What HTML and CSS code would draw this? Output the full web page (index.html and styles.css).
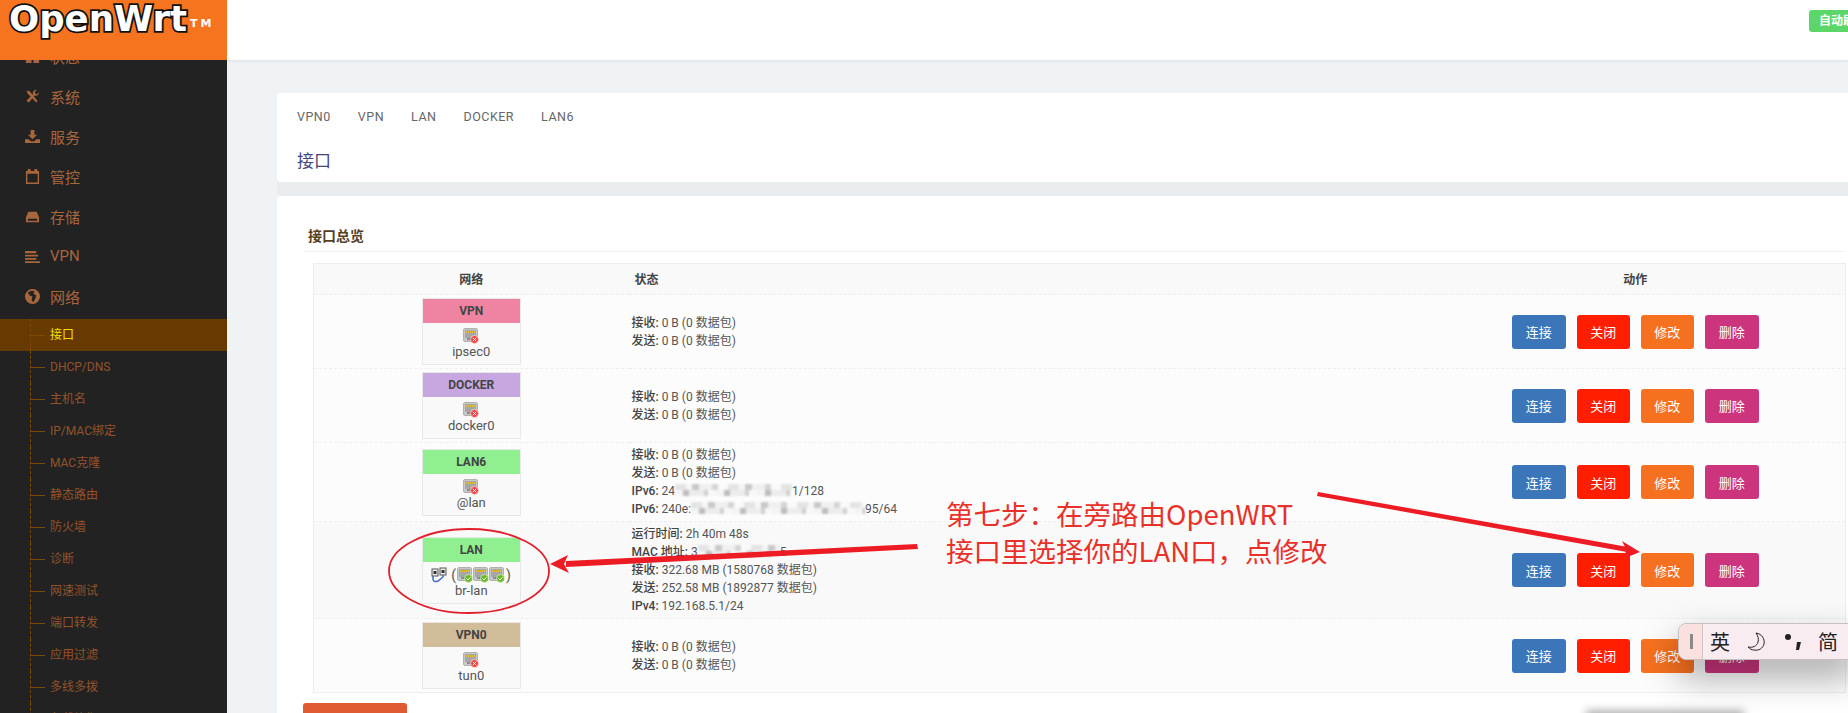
FILE: index.html
```html
<!DOCTYPE html>
<html lang="zh-CN">
<head>
  <meta charset="UTF-8" />
  <title>接口 - OpenWrt</title>
  <link rel="stylesheet" href="styles.css">
</head>
<body>
  <svg class="defs" width="0" height="0">
    <symbol id="port" viewBox="0 0 16 16">
      <rect x="0.5" y="0.5" width="14" height="13" rx="1.5" fill="#c8c8c8" stroke="#b0b0b0"/>
      <rect x="2" y="2" width="11" height="8" fill="#a6a6a6"/>
      <path d="M3 3h1v2H3zM5 3h1v2H5zM7 3h1v2H7zM9 3h1v2H9zM11 3h1v2h-1z" fill="#e0c040"/>
      <rect x="4" y="10" width="7" height="2" fill="#8c8c8c"/>
    </symbol>
    <symbol id="down" viewBox="0 0 16 16">
      <use href="#port"/>
      <circle cx="11.5" cy="11.5" r="4" fill="#ee4444" stroke="#fff" stroke-width="0.6"/>
      <path d="M9.8 9.8l3.4 3.4M13.2 9.8l-3.4 3.4" stroke="#fff" stroke-width="1"/>
    </symbol>
    <symbol id="up" viewBox="0 0 16 16">
      <use href="#port"/>
      <circle cx="11.5" cy="11.5" r="4" fill="#66bb22" stroke="#fff" stroke-width="0.6"/>
      <path d="M9.6 11.5l1.5 1.5 2.4-2.8" stroke="#fff" stroke-width="1" fill="none"/>
    </symbol>
  </svg>

  <div class="app">
    <aside class="sidebar">
      <div class="brand"><span class="logo">OpenWrt</span><span class="tm">TM</span></div>
      <nav class="menu">
        <a class="top" href="#">
          <svg class="ico" viewBox="0 0 16 16"><path d="M1 15V7l3-3 3 3v8zM9 15V7l3-3 3 3v8z"/></svg>状态
        </a>
        <a class="top" href="#">
          <svg class="ico" viewBox="0 0 16 16"><path d="M1.500 1.500l3.500 1L13.500 13l-1.500 1.500L3 5z"/><path d="M15 3.500a3.500 3.500 0 0 1-4.500 3.500L4 14.500 1.500 12.500 8.500 5.500A3.500 3.500 0 0 1 12.500 1L10.500 3l.5 2 2 .5z"/></svg>系统
        </a>
        <a class="top" href="#">
          <svg class="ico" viewBox="0 0 16 16"><path d="M6 1h4v5h3l-5 5-5-5h3z"/><path d="M0 11h4l2 2h4l2-2h4v4H0z"/></svg>服务
        </a>
        <a class="top" href="#">
          <svg class="ico" viewBox="0 0 16 16"><path fill-rule="evenodd" d="M1 2h2V0h3v2h4V0h3v2h2v14H1zM2.500 5v9.500h11V5z"/></svg>管控
        </a>
        <a class="top" href="#">
          <svg class="ico" viewBox="0 0 16 16"><path fill-rule="evenodd" d="M3.500 3h9L15 9v5H1V9zM3 10.500v2h10v-2z"/></svg>存储
        </a>
        <a class="top" href="#">
          <svg class="ico" viewBox="0 0 16 16"><path d="M0 2h12v2.500H0zM0 6h14v2H0zM0 9.500h12v2H0zM0 13h16v2H0z"/></svg>VPN
        </a>
        <a class="top" href="#">
          <svg class="ico" viewBox="0 0 16 16"><path fill-rule="evenodd" d="M8 0a8 8 0 1 1 0 16A8 8 0 0 1 8 0zM3 4l2 3 3 1-1 4 2 2 2-4 1-3-3-2 1-3H6z"/></svg>网络
        </a>
        <ul class="sub">
          <li><a class="active" href="#">接口</a></li>
          <li><a href="#">DHCP/DNS</a></li>
          <li><a href="#">主机名</a></li>
          <li><a href="#">IP/MAC绑定</a></li>
          <li><a href="#">MAC克隆</a></li>
          <li><a href="#">静态路由</a></li>
          <li><a href="#">防火墙</a></li>
          <li><a href="#">诊断</a></li>
          <li><a href="#">网速测试</a></li>
          <li><a href="#">端口转发</a></li>
          <li><a href="#">应用过滤</a></li>
          <li><a href="#">多线多拨</a></li>
          <li><a href="#">负载均衡</a></li>
        </ul>
      </nav>
    </aside>

    <div class="main">
      <header class="topbar"><span class="refresh">自动刷新</span></header>

      <div class="content">
        <section class="card head-card">
          <div class="tabs">
            <a href="#">VPN0</a><a href="#">VPN</a><a href="#">LAN</a><a href="#">DOCKER</a><a href="#">LAN6</a>
          </div>
          <h2 class="title">接口</h2>
        </section>

        <section class="card body-card">
          <h3 class="section">接口总览</h3>
          <table class="ifaces">
            <colgroup><col class="c1"><col class="c2"><col class="c3"></colgroup>
            <thead>
              <tr><th>网络</th><th class="left">状态</th><th>动作</th></tr>
            </thead>
            <tbody>
              <tr>
                <td>
                  <div class="badge">
                    <div class="band pink">VPN</div>
                    <svg class="port"><use href="#down"/></svg>
                    <div class="name">ipsec0</div>
                  </div>
                </td>
                <td class="status">
                  <b>接收:</b> 0 B (0 数据包)<br><b>发送:</b> 0 B (0 数据包)
                </td>
                <td class="actions">
                  <button class="blue">连接</button><button class="red">关闭</button><button class="orange">修改</button><button class="rose">删除</button>
                </td>
              </tr>
              <tr>
                <td>
                  <div class="badge">
                    <div class="band purple">DOCKER</div>
                    <svg class="port"><use href="#down"/></svg>
                    <div class="name">docker0</div>
                  </div>
                </td>
                <td class="status">
                  <b>接收:</b> 0 B (0 数据包)<br><b>发送:</b> 0 B (0 数据包)
                </td>
                <td class="actions">
                  <button class="blue">连接</button><button class="red">关闭</button><button class="orange">修改</button><button class="rose">删除</button>
                </td>
              </tr>
              <tr>
                <td>
                  <div class="badge">
                    <div class="band green">LAN6</div>
                    <svg class="port"><use href="#down"/></svg>
                    <div class="name">@lan</div>
                  </div>
                </td>
                <td class="status">
                  <b>接收:</b> 0 B (0 数据包)<br><b>发送:</b> 0 B (0 数据包)<br>
                  <b>IPv6:</b> 24<span class="blur w1"></span>1/128<br>
                  <b>IPv6:</b> 240e:<span class="blur w2"></span>95/64
                </td>
                <td class="actions">
                  <button class="blue">连接</button><button class="red">关闭</button><button class="orange">修改</button><button class="rose">删除</button>
                </td>
              </tr>
              <tr class="shade">
                <td>
                  <div class="badge">
                    <div class="band green">LAN</div>
                    <div class="bridge">
                      <svg class="port" viewBox="0 0 16 16">
                        <rect x="1" y="2" width="6" height="7" fill="#eee" stroke="#555"/>
                        <rect x="9" y="1" width="6" height="7" fill="#eee" stroke="#555"/>
                        <rect x="2.500" y="4" width="3" height="3" fill="#333"/>
                        <rect x="10.500" y="3" width="3" height="3" fill="#333"/>
                        <path d="M2 9v3c0 3 3 3 5 2l5-4V8" fill="none" stroke="#3a6fc0" stroke-width="1.500"/>
                      </svg>
                      <span class="paren">(</span><svg class="port"><use href="#up"/></svg><svg class="port"><use href="#up"/></svg><svg class="port"><use href="#up"/></svg><span class="paren">)</span>
                    </div>
                    <div class="name">br-lan</div>
                  </div>
                </td>
                <td class="status">
                  <b>运行时间:</b> 2h 40m 48s<br>
                  <b>MAC 地址:</b> 3<span class="blur w3"></span>5<br>
                  <b>接收:</b> 322.68 MB (1580768 数据包)<br>
                  <b>发送:</b> 252.58 MB (1892877 数据包)<br>
                  <b>IPv4:</b> 192.168.5.1/24
                </td>
                <td class="actions">
                  <button class="blue">连接</button><button class="red">关闭</button><button class="orange">修改</button><button class="rose">删除</button>
                </td>
              </tr>
              <tr>
                <td>
                  <div class="badge">
                    <div class="band tan">VPN0</div>
                    <svg class="port"><use href="#down"/></svg>
                    <div class="name">tun0</div>
                  </div>
                </td>
                <td class="status">
                  <b>接收:</b> 0 B (0 数据包)<br><b>发送:</b> 0 B (0 数据包)
                </td>
                <td class="actions">
                  <button class="blue">连接</button><button class="red">关闭</button><button class="orange">修改</button><button class="rose">删除</button>
                </td>
              </tr>
            </tbody>
          </table>
          <div class="add-btn"></div>
        </section>
      </div>
    </div>
  </div>

  <!-- red markup drawn on top of the screenshot -->
  <svg class="markup" viewBox="0 0 1848 713">
    <ellipse cx="469" cy="571" rx="80" ry="42" fill="none" stroke="#e0202c" stroke-width="1.800"/>
    <polygon points="566,561 917,544 918,549 566,567" fill="#ed1c24"/>
    <polygon points="550,564 568,555 564,564 569,573" fill="#ed1c24"/>
    <polygon points="1318,492 1628,547 1627,552 1317,496" fill="#ed1c24"/>
    <polygon points="1640,552 1622,541 1626,549 1625,558" fill="#ed1c24"/>
  </svg>
  <div class="note">第七步：在旁路由OpenWRT<br>接口里选择你的LAN口，点修改</div>

  <div class="ime">
    <span class="grip"></span>
    <span class="ime-item first">英</span>
    <svg class="ime-icon" viewBox="0 0 20 20"><path d="M9 1c6 1 9 6 8 11-1 4-5 7-10 6-2 0-4-1-6-3 5 1 9-1 10-5 1-3 0-6-2-9z" fill="none" stroke="#222" stroke-width="1"/></svg>
    <svg class="ime-icon dot" viewBox="0 0 20 20"><circle cx="4" cy="5" r="3" fill="#222"/><path d="M13 10h4l-2 8h-3z" fill="#222"/></svg>
    <span class="ime-item">简</span>
  </div>
  <div class="ime-shadow"></div>
</body>
</html>
```

FILE: styles.css
```css
* { box-sizing: border-box; }
html, body { margin: 0; height: 100%; overflow: hidden; }
body { font-family: Roboto, "Noto Sans CJK SC", sans-serif; font-size: 12px; color: #555; background: #f0f3f5; position: relative; }
a { text-decoration: none; color: inherit; }
.defs { position: absolute; }
.app { display: flex; height: 713px; }

/* Sidebar */
.sidebar { width: 227px; flex: none; background: #222; overflow: hidden; }
.brand { position: relative; z-index: 2; height: 60px; background: #f6731f; padding: 1px 0 0 9px; display: flex; align-items: flex-start; }
.logo { font-family: "DejaVu Sans", sans-serif; font-weight: bold; font-size: 35.500px; line-height: 36px; color: #fff; -webkit-text-stroke: 3.500px #111; paint-order: stroke fill; }
.tm { color: #fff; font-family: "DejaVu Sans", sans-serif; font-weight: bold; font-size: 11px; letter-spacing: 3px; margin-top: 16px; margin-left: 3px; }
.menu { margin-top: -24px; }
.top { display: flex; align-items: center; height: 40px; padding-left: 25px; font-size: 15px; color: #a8663c; }
.ico { width: 15px; height: 15px; margin-right: 10px; fill: #a8663c; }
.sub { list-style: none; margin: 3px 0 0; padding: 0; }
.sub a { display: block; position: relative; height: 32px; line-height: 32px; padding-left: 50px; color: #94532a; }
.sub a::before { content: ""; position: absolute; left: 30px; top: 0; bottom: 0; border-left: 1px dashed #7d4a05; }
.sub a::after { content: ""; position: absolute; left: 30px; top: 16px; width: 15px; border-top: 1px solid #7d4a05; }
.sub a.active { background: #663a00; color: #f5e000; }

/* Top bar */
.main { flex: 1; min-width: 0; }
.topbar { height: 60px; background: #fff; box-shadow: 0 2px 2px rgba(0,0,0,0.05); display: flex; justify-content: flex-end; align-items: flex-start; padding-top: 10px; }
.refresh { flex: none; width: 68px; height: 22px; line-height: 22px; margin-right: -29px; padding-left: 10px; background: #5cd66a; color: #fff; border-radius: 3px; font-weight: bold; }

/* Cards */
.content { padding: 33px 0 0 50px; }
.card { background: #fff; border-radius: 4px 0 0 4px; }
.head-card { height: 89px; padding: 15px 20px 0; box-shadow: 0 14px 0 #e9edef; }
.tabs { display: flex; gap: 27px; height: 18px; line-height: 18px; font-size: 12.500px; letter-spacing: 0.500px; color: #666; }
.title { margin: 23px 0 0; font-size: 17px; font-weight: normal; line-height: 24px; color: #45457a; }
.body-card { margin-top: 14px; padding: 31px 2px 0 27px; }
.section { margin: 0; padding: 0 0 7px 4px; height: 25px; line-height: 18px; font-size: 14px; font-weight: bold; color: #54401f; border-bottom: 1px solid #f3f3f3; }

/* Interface table */
.ifaces { width: 1532px; margin: 11px 0 0 9px; border-collapse: collapse; table-layout: fixed; border: 1px solid #eee; background: #fcfcfc; }
.c1 { width: 315px; }
.c2 { width: 797px; }
.c3 { width: 420px; }
.ifaces th { height: 31px; padding: 0 0 2px; font-size: 12px; font-weight: bold; color: #444; background: #f9f9f9; border-bottom: 1px dashed #eee; }
.ifaces th.left { text-align: left; padding-left: 6px; }
.ifaces td { padding: 3px; border-bottom: 1px dashed #eee; text-align: center; vertical-align: middle; }
.shade td { background: #f9f9f9; }
.ifaces td.status { text-align: left; line-height: 18px; color: #555; }
.status b { font-weight: 500; color: #444; }
.blur {
  display: inline-block; height: 12px; vertical-align: -1px; filter: blur(0.800px);
  background-image: repeating-linear-gradient(90deg, #e4e4e4 0 11px, #f6f6f6 11px 17px, #c8c8c8 17px 24px, #f0f0f0 24px 37px, #d4d4d4 37px 43px, #fafafa 43px 53px),
    repeating-linear-gradient(90deg, #f4f4f4 0 8px, #bdbdbd 8px 14px, #ececec 14px 29px, #d0d0d0 29px 33px, #f8f8f8 33px 41px);
  background-size: 100% 6px, 100% 6px;
  background-position: 0 0, 0 6px;
  background-repeat: no-repeat;
}
.w1 { width: 117px; }
.w2 { width: 174px; }
.w3 { width: 82px; }

.badge { width: 99px; height: 67px; margin: 0 auto; background: #f9f9f9; border: 1px solid #e8e8e8; }
.band { height: 24px; line-height: 24px; font-weight: bold; color: #444; }
.pink { background: #ef84a2; }
.purple { background: #c8a7e0; }
.green { background: #90f090; }
.tan { background: #d2bd9a; }
.port { display: inline-block; width: 16px; height: 16px; vertical-align: top; }
.badge > .port { display: block; margin: 5px auto 0; }
.bridge { height: 16px; margin-top: 5px; white-space: nowrap; line-height: 16px; font-size: 14px; }
.paren { display: inline-block; vertical-align: top; margin: 0 1px; }
.name { margin-top: -1px; font-size: 13px; line-height: 17px; color: #555; }

.actions { white-space: nowrap; }
.actions button { width: 53px; height: 34px; padding: 0; margin: 0 5.500px; border: none; border-radius: 3px; color: #fff; font-family: inherit; font-size: 13px; }
.actions .blue, .actions .rose { width: 54px; }
.blue { background: #3a76b8; }
.red { background: #ff1f00; }
.orange { background: #f6711f; }
.rose { background: #cc357e; }
.add-btn { width: 104px; height: 34px; margin: 10px 0 0 -1px; background: #e05a33; border-radius: 3px; }

/* Overlays: hand markup and the floating IME bar */
.markup { position: absolute; left: 0; top: 0; width: 1848px; height: 713px; pointer-events: none; }
.note { position: absolute; left: 946px; top: 495px; font-family: "Noto Sans CJK SC", sans-serif; font-size: 27.500px; line-height: 37px; color: #e8312a; white-space: nowrap; }
.ime { position: absolute; left: 1678px; top: 623px; width: 180px; height: 37px; display: flex; align-items: center; background: #f9ecf0; border: 1px solid #c8c0c0; border-radius: 8px 0 0 8px; box-shadow: 0 16px 36px rgba(0,0,0,0.35); font-family: "Noto Sans CJK SC", sans-serif; font-size: 20px; color: #222; }
.grip { width: 24px; height: 100%; flex: none; background: #fbe0e0; border-right: 1px solid #d0c4c4; border-radius: 8px 0 0 8px; position: relative; }
.grip::after { content: ""; position: absolute; left: 11px; top: 10px; width: 3px; height: 15px; background: #8a8a8a; }
.ime-item { flex: none; width: 20px; }
.ime-item.first { margin: 0 17px 0 7px; }
.ime-icon { flex: none; width: 20px; height: 20px; margin-right: 17px; }
.ime-icon.dot { margin-right: 14px; }
.ime-shadow { position: absolute; left: 1590px; top: 714px; width: 150px; height: 6px; box-shadow: 0 0 9px 4px rgba(0,0,0,0.3); }
```
